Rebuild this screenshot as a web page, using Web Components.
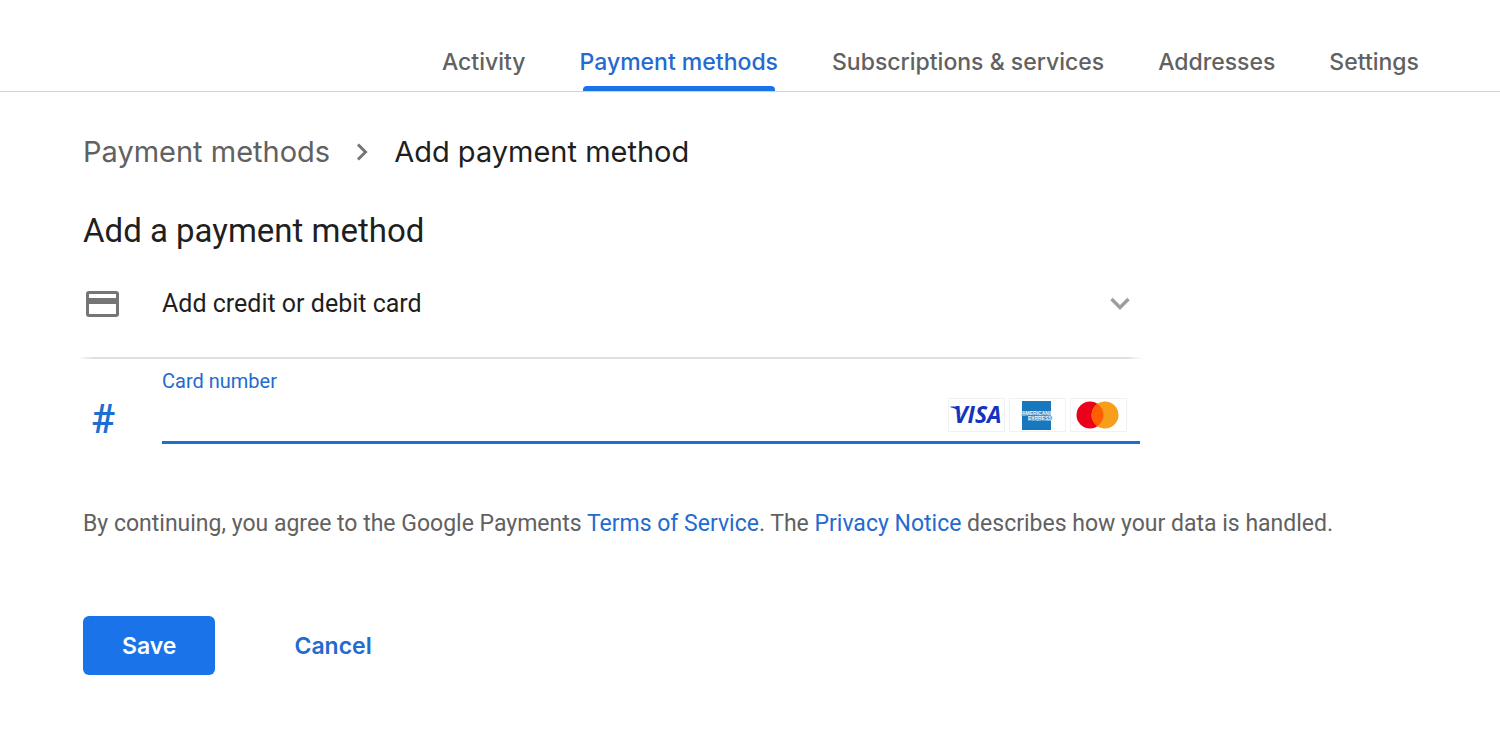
<!DOCTYPE html>
<html lang="en">
<head>
<meta charset="utf-8">
<meta name="viewport" content="width=device-width, initial-scale=1">
<title>Add payment method</title>
<style>
	:root {
		--blue: #1a73e8;
		--blue-text: #246acf;
		--blue-line: #1b6fd0;
		--text: #1f1f1f;
		--muted: #616161;
		--line: #d2d2d4;
		--heading-font: Inter, Roboto, sans-serif;
		--page-gutter: 83px;
	}

	body {
		margin: 0;
		background: #fff;
		color: var(--text);
		font-family: Roboto, "Liberation Sans", sans-serif;
	}
</style>
</head>
<body>

<pay-nav>
	<pay-tab href="#activity">Activity</pay-tab>
	<pay-tab href="#methods" active>Payment methods</pay-tab>
	<pay-tab href="#subscriptions">Subscriptions &amp; services</pay-tab>
	<pay-tab href="#addresses">Addresses</pay-tab>
	<pay-tab href="#settings">Settings</pay-tab>
</pay-nav>

<pay-page>
	<pay-breadcrumb slot="path" href="#methods">
		<span slot="parent">Payment methods</span>
		<span slot="current">Add payment method</span>
	</pay-breadcrumb>
	<span slot="title">Add a payment method</span>
	<pay-option>Add credit or debit card</pay-option>
	<card-field></card-field>
	<pay-terms></pay-terms>
	<pay-actions></pay-actions>
</pay-page>

<script>
// Small base: every element returns its template from getTemplate()
class PayElement extends HTMLElement {
	constructor() {
		super();
		this.attachShadow({ mode: "open" });
	}

	connectedCallback() {
		const template = document.createElement("template");
		template.innerHTML = this.getTemplate();
		this.shadowRoot.replaceChildren(template.content.cloneNode(true));
	}
}

class PayNav extends PayElement {
	getTemplate() {
		return `
			<style>
				:host {
					display: block;
					border-bottom: 1px solid var(--line);
				}

				nav {
					display: flex;
					justify-content: flex-end;
					gap: 54px;
					padding: 32px 81px 0;
				}
			</style>
			<nav aria-label="Sections"><slot></slot></nav>
		`;
	}
}

class PayTab extends PayElement {
	getTemplate() {
		const current = this.hasAttribute("active") ? 'aria-current="page"' : "";
		return `
			<style>
				:host {
					display: block;
					white-space: nowrap;
				}

				a {
					display: block;
					position: relative;
					height: 59px;
					color: var(--muted);
					font: 500 23px/60px var(--heading-font);
					text-decoration: none;
				}

				a[aria-current] {
					color: var(--blue-text);
				}

				/* active marker lies over the bottom edge of the tab */
				a[aria-current]::after {
					content: "";
					position: absolute;
					right: 3px;
					bottom: 0;
					left: 3px;
					height: 5px;
					border-radius: 4px 4px 0 0;
					background: var(--blue);
				}
			</style>
			<a href="${this.getAttribute("href")}" ${current}><slot></slot></a>
		`;
	}
}

class PayPage extends PayElement {
	getTemplate() {
		return `
			<style>
				:host {
					display: block;
					padding: 40px var(--page-gutter);
				}

				h1 {
					margin: 39px 0 0;
					font-size: 33px;
					font-weight: 400;
					line-height: 40px;
				}
			</style>
			<main>
				<slot name="path"></slot>
				<h1><slot name="title"></slot></h1>
				<slot></slot>
			</main>
		`;
	}
}

class PayBreadcrumb extends PayElement {
	getTemplate() {
		return `
			<style>
				:host {
					display: block;
				}

				nav {
					display: flex;
					align-items: center;
					gap: 26px;
					font: 400 29px/40px var(--heading-font);
				}

				a {
					color: var(--muted);
					text-decoration: none;
				}

				svg {
					display: block;
				}
			</style>
			<nav aria-label="Breadcrumb">
				<a href="${this.getAttribute("href")}"><slot name="parent"></slot></a>
				<svg width="12" height="18" viewBox="0 0 12 18" fill="none" stroke="#757575" stroke-width="3" aria-hidden="true">
					<path d="M2 1.500 9.500 9 2 16.500"/>
				</svg>
				<slot name="current"></slot>
			</nav>
		`;
	}
}

class PayOption extends PayElement {
	getTemplate() {
		return `
			<style>
				:host {
					display: block;
					max-width: 1057px;
				}

				button {
					display: grid;
					grid-template-columns: 79px 1fr auto;
					align-items: center;
					width: 100%;
					height: 106px;
					padding: 0 10px 0 0;
					border: 0;
					background: none;
					color: inherit;
					font: 400 25px/32px Roboto, sans-serif;
					text-align: left;
				}

				svg {
					display: block;
				}

				.card {
					margin-left: 2px;
				}

				/* divider fades out at both ends */
				.divider {
					height: 2px;
					margin: 0 -3px 0 -6px;
					background: linear-gradient(90deg, transparent, #dfdfdf 16px calc(100% - 16px), transparent);
				}
			</style>
			<button type="button" aria-expanded="true">
				<svg class="card" width="35" height="28" viewBox="0 0 35 28" aria-hidden="true">
					<path fill="#757575" fill-rule="evenodd" d="M4 1h27a3 3 0 0 1 3 3v20a3 3 0 0 1-3 3H4a3 3 0 0 1-3-3V4a3 3 0 0 1 3-3zM4 4v4h27V4zM4 14v10h27V14z"/>
				</svg>
				<span><slot></slot></span>
				<svg width="20" height="14" viewBox="0 0 20 14" fill="none" stroke="#9e9e9e" stroke-width="3.500" aria-hidden="true">
					<path d="M1.500 2 10 10.500 18.500 2"/>
				</svg>
			</button>
			<div class="divider"></div>
		`;
	}
}

class CardBrand extends PayElement {
	getTemplate() {
		const marks = {
			visa: `
				<svg width="55" height="32" viewBox="1 0 55 32" role="img" aria-label="Visa">
					<text x="6" y="24" fill="#1434c0" font-family="Open Sans, sans-serif" font-size="23" font-weight="700" font-style="italic">VISA</text>
					<path fill="#1434c0" d="M2.500 7.500h7.500l3 9C11 11.500 7.500 9 2.500 8.200z"/>
				</svg>`,
			amex: `
				<svg width="55" height="32" viewBox="1 0 55 32" role="img" aria-label="American Express">
					<path fill="#1878bd" d="M13 2h29v29H13z"/>
					<path fill="#a9d0ec" d="M13 12h29v5H13zM19 17h23v5H19z"/>
					<text x="13" y="16" fill="#fff" stroke="#1878bd" stroke-width="1" paint-order="stroke" font-family="Liberation Sans" font-size="5" font-weight="700">AMERICAN</text>
					<text x="19" y="21" fill="#fff" stroke="#1878bd" stroke-width="1" paint-order="stroke" font-family="Liberation Sans" font-size="5" font-weight="700">EXPRESS</text>
				</svg>`,
			mastercard: `
				<svg width="55" height="32" viewBox="1 0 55 32" role="img" aria-label="Mastercard">
					<circle cx="20" cy="16" r="13.500" fill="#eb001b"/>
					<circle cx="35" cy="16" r="13.500" fill="#f79e1b"/>
					<path fill="#ff5f00" d="M27.500 4.780a13.500 13.500 0 0 1 0 22.440 13.500 13.500 0 0 1 0-22.440z"/>
				</svg>`,
		};
		return `
			<style>
				:host {
					display: block;
					border: 1px solid #f1f1f1;
				}

				svg {
					display: block;
				}
			</style>
			${marks[this.getAttribute("name")]}
		`;
	}
}

class CardField extends PayElement {
	getTemplate() {
		return `
			<style>
				:host {
					display: grid;
					grid-template-columns: 79px 1fr;
					max-width: 1057px;
					height: 85px;
				}

				.hash {
					padding: 37px 0 0 8px;
					color: var(--blue-line);
					font-size: 40px;
					font-weight: 500;
					line-height: 48px;
				}

				.field {
					display: flex;
					flex-direction: column;
					border-bottom: 3px solid var(--blue-line);
				}

				label {
					padding-top: 10px;
					color: var(--blue-text);
					font-size: 20px;
					line-height: 24px;
				}

				.row {
					display: flex;
					flex: 1;
					align-items: center;
					gap: 4px;
					padding: 0 13px 4px 0;
				}

				input {
					flex: 1;
					min-width: 0;
					height: 40px;
					padding: 0;
					border: 0;
					outline: 0;
					background: none;
					color: inherit;
					font: 400 25px/32px Roboto, sans-serif;
				}
			</style>
			<span class="hash" aria-hidden="true">#</span>
			<div class="field">
				<label for="number">Card number</label>
				<div class="row">
					<input id="number" type="text" inputmode="numeric" autocomplete="cc-number">
					<card-brand name="visa"></card-brand>
					<card-brand name="amex"></card-brand>
					<card-brand name="mastercard"></card-brand>
				</div>
			</div>
		`;
	}
}

class PayTerms extends PayElement {
	getTemplate() {
		return `
			<style>
				:host {
					display: block;
					margin-top: 64px;
					color: var(--muted);
					font-size: 23px;
					line-height: 32px;
				}

				p {
					margin: 0;
				}

				a {
					color: var(--blue-text);
					text-decoration: none;
				}
			</style>
			<p>By continuing, you agree to the Google Payments <a href="#terms">Terms of Service</a>. The <a href="#privacy">Privacy Notice</a> describes how your data is handled.</p>
		`;
	}
}

class PayActions extends PayElement {
	getTemplate() {
		return `
			<style>
				:host {
					display: flex;
					gap: 40px;
					margin-top: 76px;
				}

				button {
					height: 59px;
					padding: 0 39px;
					border: 0;
					border-radius: 6px;
					background: none;
					color: var(--blue-text);
					font: 600 23px/32px var(--heading-font);
				}

				.save {
					background: var(--blue);
					color: #fff;
				}
			</style>
			<button class="save" type="submit">Save</button>
			<button type="button">Cancel</button>
		`;
	}
}

customElements.define("pay-nav", PayNav);
customElements.define("pay-tab", PayTab);
customElements.define("pay-page", PayPage);
customElements.define("pay-breadcrumb", PayBreadcrumb);
customElements.define("pay-option", PayOption);
customElements.define("card-brand", CardBrand);
customElements.define("card-field", CardField);
customElements.define("pay-terms", PayTerms);
customElements.define("pay-actions", PayActions);
</script>
</body>
</html>
